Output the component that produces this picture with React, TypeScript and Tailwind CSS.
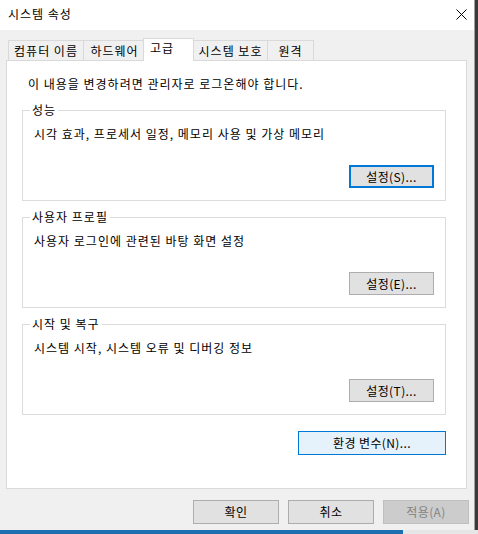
import React from 'react';

const font = "font-['Noto_Sans_CJK_KR','Liberation_Sans',sans-serif]";

type BtnProps = {
  label: string;
  kind?: 'normal' | 'focus' | 'hover' | 'disabled';
  className?: string;
};

const Button = ({ label, kind = 'normal', className = '' }: BtnProps) => {
  const look =
    kind === 'focus'
      ? 'border-2 border-[#0078d7] bg-[#e1e1e1] text-black'
      : kind === 'hover'
      ? 'border border-[#0078d7] bg-[#e5f1fb] text-black'
      : kind === 'disabled'
      ? 'border border-[#bfbfbf] bg-[#cccccc] text-[#838383]'
      : 'border border-[#adadad] bg-[#e1e1e1] text-black';
  return (
    <div className={`flex items-center justify-center text-[12px] leading-[16px] tracking-[0.4px] ${look} ${className}`}>
      {label}
    </div>
  );
};

const GroupBox = ({
  title,
  text,
  button,
  focus = false,
  className = '',
}: {
  title: string;
  text: string;
  button: string;
  focus?: boolean;
  className?: string;
}) => (
  <div className={`relative ml-[15px] w-[424px] border border-[#dcdcdc] pt-[15px] pb-[12px] pl-[11px] pr-[11px] flex flex-col ${className}`}>
    <span className="absolute -top-[9px] left-[7px] bg-white px-[2px] leading-[16px]">{title}</span>
    <div className="h-[16px] leading-[16px]">{text}</div>
    <Button label={button} kind={focus ? 'focus' : 'normal'} className="mt-[23px] self-end w-[85px] h-[23px]" />
  </div>
);

const tabs = [
  { name: '컴퓨터 이름', w: 'w-[76px]', ml: '' },
  { name: '하드웨어', w: 'w-[63px]', ml: '-ml-px' },
  { name: '고급', w: 'w-[51px]', ml: '-ml-[3px]', active: true },
  { name: '시스템 보호', w: 'w-[75px]', ml: '-ml-px' },
  { name: '원격', w: 'w-[47px]', ml: '-ml-px' },
];

export default function App() {
  return (
    <div className={`w-[478px] h-[534px] flex flex-col bg-[#f0f0f0] text-[12px] tracking-[1px] text-black ${font}`}>
      <div className="flex flex-1 min-h-0">
        {/* window */}
        <div className="w-[475px] flex flex-col bg-[#f0f0f0] border-r border-[#a0a0a0]">
          {/* title bar */}
          <div className="h-[30px] bg-white flex items-center justify-between pl-[8px] pr-[7px]">
            <span className="leading-[16px] -mt-[2px]">시스템 속성</span>
            <svg width="11" height="11" viewBox="0 0 11 11" className="-mt-[1px]">
              <path d="M0.5 0.5 L10.5 10.5 M10.5 0.5 L0.5 10.5" stroke="#000" strokeWidth="1" fill="none" />
            </svg>
          </div>

          {/* tabs */}
          <div className="h-[30px] flex items-end pl-[8px]">
            {tabs.map((t) =>
              t.active ? (
                <div
                  key={t.name}
                  className={`relative z-10 -mb-px h-[23px] ${t.w} ${t.ml} border border-b-0 border-[#d9d9d9] bg-white pl-[6px] pt-[1px] leading-[16px]`}
                >
                  {t.name}
                </div>
              ) : (
                <div
                  key={t.name}
                  className={`h-[20px] ${t.w} ${t.ml} border border-b-0 border-[#d9d9d9] bg-[#f0f0f0] flex items-center justify-center leading-[16px]`}
                >
                  {t.name}
                </div>
              )
            )}
          </div>

          {/* panel */}
          <div className="ml-[6px] w-[461px] h-[429px] border border-[#d9d9d9] bg-white flex flex-col">
            <div className="pt-[15px] pl-[21px] leading-[16px]">이 내용을 변경하려면 관리자로 로그온해야 합니다.</div>
            <GroupBox
              className="mt-[18px]"
              title="성능"
              text="시각 효과, 프로세서 일정, 메모리 사용 및 가상 메모리"
              button="설정(S)..."
              focus
            />
            <GroupBox
              className="mt-[16px]"
              title="사용자 프로필"
              text="사용자 로그인에 관련된 바탕 화면 설정"
              button="설정(E)..."
            />
            <GroupBox
              className="mt-[16px]"
              title="시작 및 복구"
              text="시스템 시작, 시스템 오류 및 디버깅 정보"
              button="설정(T)..."
            />
            <div className="ml-[15px] w-[424px] mt-[16px] flex justify-end">
              <Button label="환경 변수(N)..." kind="hover" className="w-[148px] h-[24px]" />
            </div>
          </div>

          {/* footer */}
          <div className="mt-[11px] flex justify-end gap-[9px] pr-[5px]">
            <Button label="확인" className="w-[86px] h-[24px]" />
            <Button label="취소" className="w-[86px] h-[24px]" />
            <Button label="적용(A)" kind="disabled" className="w-[86px] h-[24px]" />
          </div>
        </div>
        <div className="w-[3px] bg-[#3a3a3a]" />
      </div>
      <div className="h-[4px] flex">
        <div className="w-[403px] bg-[#1c6eb0]" />
        <div className="flex-1 bg-[#e6e6e6]" />
      </div>
    </div>
  );
}
